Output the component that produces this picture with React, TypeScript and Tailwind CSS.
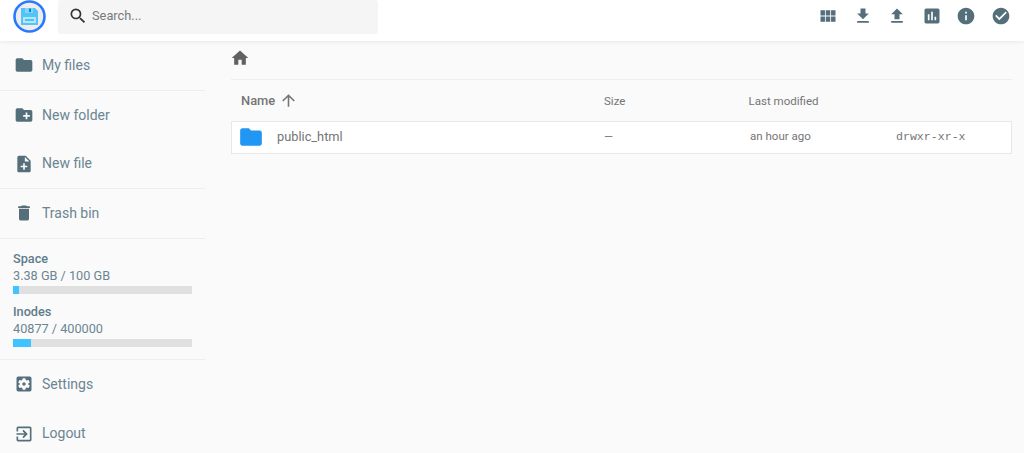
import {
  MdFolder,
  MdCreateNewFolder,
  MdNoteAdd,
  MdDelete,
  MdSettingsApplications,
  MdExitToApp,
  MdViewModule,
  MdFileDownload,
  MdFileUpload,
  MdInsertChart,
  MdInfo,
  MdCheckCircle,
  MdHome,
  MdArrowUpward,
  MdSearch,
} from 'react-icons/md';
import type { IconType } from 'react-icons';

function NavItem({ icon: Icon, label }: { icon: IconType; label: string }) {
  return (
    <div className="flex h-[48.5px] items-center pl-[14px] text-[14px] text-[#6b8592]">
      <Icon className="text-[20px] text-[#546e7a]" />
      <span className="ml-[8px]">{label}</span>
    </div>
  );
}

function Meter({ title, value, percent }: { title: string; value: string; percent: number }) {
  return (
    <div className="mb-[9px]">
      <div className="text-[12.7px] leading-[17px] font-medium text-[#607d8b]">{title}</div>
      <div className="text-[12.7px] leading-[17px] text-[#6b8592]">{value}</div>
      <div className="mt-[2px] h-2 w-[179px] bg-[#e0e0e0]">
        <div className="h-full bg-[#40c4ff]" style={{ width: `${percent}%` }} />
      </div>
    </div>
  );
}

export default function App() {
  const actions = [MdViewModule, MdFileDownload, MdFileUpload, MdInsertChart, MdInfo, MdCheckCircle];

  return (
    <div className="flex h-[453px] w-[1024px] flex-col overflow-hidden bg-[#fafafa] font-['Roboto',sans-serif]">
      <header className="z-10 flex h-[41px] shrink-0 items-start bg-white pl-[13px] pr-[6px] shadow-[0_0_5px_rgba(0,0,0,0.1)]">
        <svg width="33" height="33" viewBox="0 0 33 33" className="shrink-0">
          <circle cx="16.5" cy="16.5" r="15" fill="#ededed" stroke="#2979ff" strokeWidth="2.6" />
          <path d="M8 8h14l3 3v14H8z" fill="#55c3f5" />
          <rect x="12" y="8" width="8" height="5" fill="#81d4fa" />
          <rect x="16" y="8.5" width="2" height="3.5" fill="#0288d1" />
          <rect x="10" y="17" width="13" height="6" fill="#b3e5fc" />
          <rect x="12" y="19" width="9" height="2" fill="#4fc3f7" />
        </svg>
        <div className="ml-[12px] flex h-[34px] w-[320px] items-center rounded-[3px] bg-[#f5f5f5] pb-[3px] pl-[10px]">
          <MdSearch className="text-[20px] text-[#333]" />
          <span className="ml-[4px] text-[12.8px] text-[#7a7a7a]">Search...</span>
        </div>
        <div className="ml-auto flex pt-[6px]">
          {actions.map((Icon, i) => (
            <div key={i} className="flex w-[34.5px] justify-center">
              <Icon className="text-[20px] text-[#546e7a]" />
            </div>
          ))}
        </div>
      </header>

      <div className="flex min-h-0 flex-1">
        <aside className="w-[205px] shrink-0">
          <div className="h-[49px]">
            <NavItem icon={MdFolder} label="My files" />
          </div>
          <div className="h-[98px] border-t border-[#eeeeee]">
            <NavItem icon={MdCreateNewFolder} label="New folder" />
            <NavItem icon={MdNoteAdd} label="New file" />
          </div>
          <div className="h-[50px] border-t border-[#eeeeee]">
            <NavItem icon={MdDelete} label="Trash bin" />
          </div>
          <div className="h-[121px] border-t border-[#eeeeee] pl-[13px] pt-[11px]">
            <Meter title="Space" value="3.38 GB / 100 GB" percent={3.38} />
            <Meter title="Inodes" value="40877 / 400000" percent={10.2} />
          </div>
          <div className="border-t border-[#eeeeee]">
            <NavItem icon={MdSettingsApplications} label="Settings" />
            <div className="pt-[1px]">
              <NavItem icon={MdExitToApp} label="Logout" />
            </div>
          </div>
        </aside>

        <main className="ml-[26px] w-[781px] text-[#757575]">
          <div className="flex h-[39px] items-center border-b border-[#eeeeee] pb-[5px]">
            <MdHome className="ml-[-1px] text-[20px] text-[#616161]" />
          </div>
          <div className="flex h-[41px] items-center text-[11.52px]">
            <div className="flex w-[373px] items-center pl-[10px]">
              <span className="text-[12.9px] font-medium">Name</span>
              <MdArrowUpward className="ml-[4px] text-[19px]" />
            </div>
            <div className="w-[144.5px] pt-[2px]">Size</div>
            <div className="pt-[2px]">Last modified</div>
          </div>
          <div className="flex h-[33px] items-center border border-[#e8e8e8] bg-white pb-[1px]">
            <div className="flex w-[372px] items-center pl-[6px]">
              <MdFolder className="text-[26px] text-[#2196f3]" />
              <span className="ml-[13px] text-[12.8px]">public_html</span>
            </div>
            <div className="w-[146px] text-[11.52px]">—</div>
            <div className="w-[146px] text-[11.52px]">an hour ago</div>
            <div className="font-['Liberation_Mono',monospace] text-[11.6px]">drwxr-xr-x</div>
          </div>
        </main>
      </div>
    </div>
  );
}
